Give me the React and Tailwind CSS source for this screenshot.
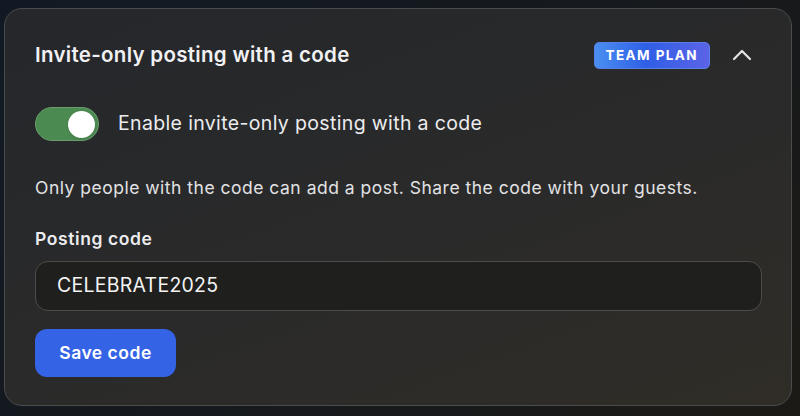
export default function App() {
  return (
    <div
      className="w-[800px] h-[416px] p-1 pt-2 bg-[linear-gradient(135deg,#111a24_0%,#17191c_60%,#1c1a16_100%)]"
      style={{ fontFamily: 'Inter, "Noto Sans", sans-serif' }}
    >
      <div className="w-[788px] h-[398px] rounded-[18px] border border-[#4a4b4d] bg-[linear-gradient(160deg,#25272b_0%,#2a2a2a_55%,#302d27_100%)] px-[30px] pt-[30px]">
        {/* Header */}
        <div className="flex items-center h-[32px]">
          <h2 className="text-[20.5px] font-semibold text-[#f1f1f3] tracking-[0.3px]">Invite-only posting with a code</h2>
          <div className="ml-auto flex items-center gap-[22px] pr-[9px]">
            <span className="h-[27px] px-[11px] flex items-center rounded-[5px] bg-[linear-gradient(90deg,#4a8ff0_0%,#2f5fe6_45%,#5b63e6_100%)] text-[13.5px] font-bold tracking-[1.4px] text-white border border-[#5a7ee8]">
              TEAM PLAN
            </span>
            <svg width="20" height="12" viewBox="0 0 20 12" fill="none" stroke="#e6e6e6" strokeWidth="2.2" strokeLinecap="round" strokeLinejoin="round">
              <polyline points="2,10 10,2 18,10" />
            </svg>
          </div>
        </div>

        {/* Toggle */}
        <div className="flex items-center gap-[19px] mt-[36px]">
          <div className="w-[64px] h-[34px] rounded-full bg-[#4b8a50] border border-[#6a9c6c] flex items-center justify-end pr-[3px]">
            <div className="w-[27px] h-[27px] rounded-full bg-white shadow" />
          </div>
          <span className="text-[19.5px] tracking-[0.35px] text-[#ececee]">Enable invite-only posting with a code</span>
        </div>

        <p className="mt-[34px] text-[17.5px] tracking-[0.5px] leading-[26px] text-[#e2e2e4]">
          Only people with the code can add a post. Share the code with your guests.
        </p>

        <div className="mt-[25px] text-[17.5px] leading-[26px] font-semibold tracking-[0.6px] text-[#ececee]">Posting code</div>

        <div className="mt-[9px] w-[727px] h-[50px] rounded-[13px] border border-[#4d4c4a] bg-[#1f1f1e] flex items-center px-[21px]">
          <span className="text-[19.5px] tracking-[0.25px] text-[#f4f4f4]">CELEBRATE2025</span>
        </div>

        <button className="mt-[18px] w-[141px] h-[48px] rounded-[12px] bg-[#3563e6] text-white text-[17.5px] tracking-[0.5px] font-semibold">
          Save code
        </button>
      </div>
    </div>
  );
}
